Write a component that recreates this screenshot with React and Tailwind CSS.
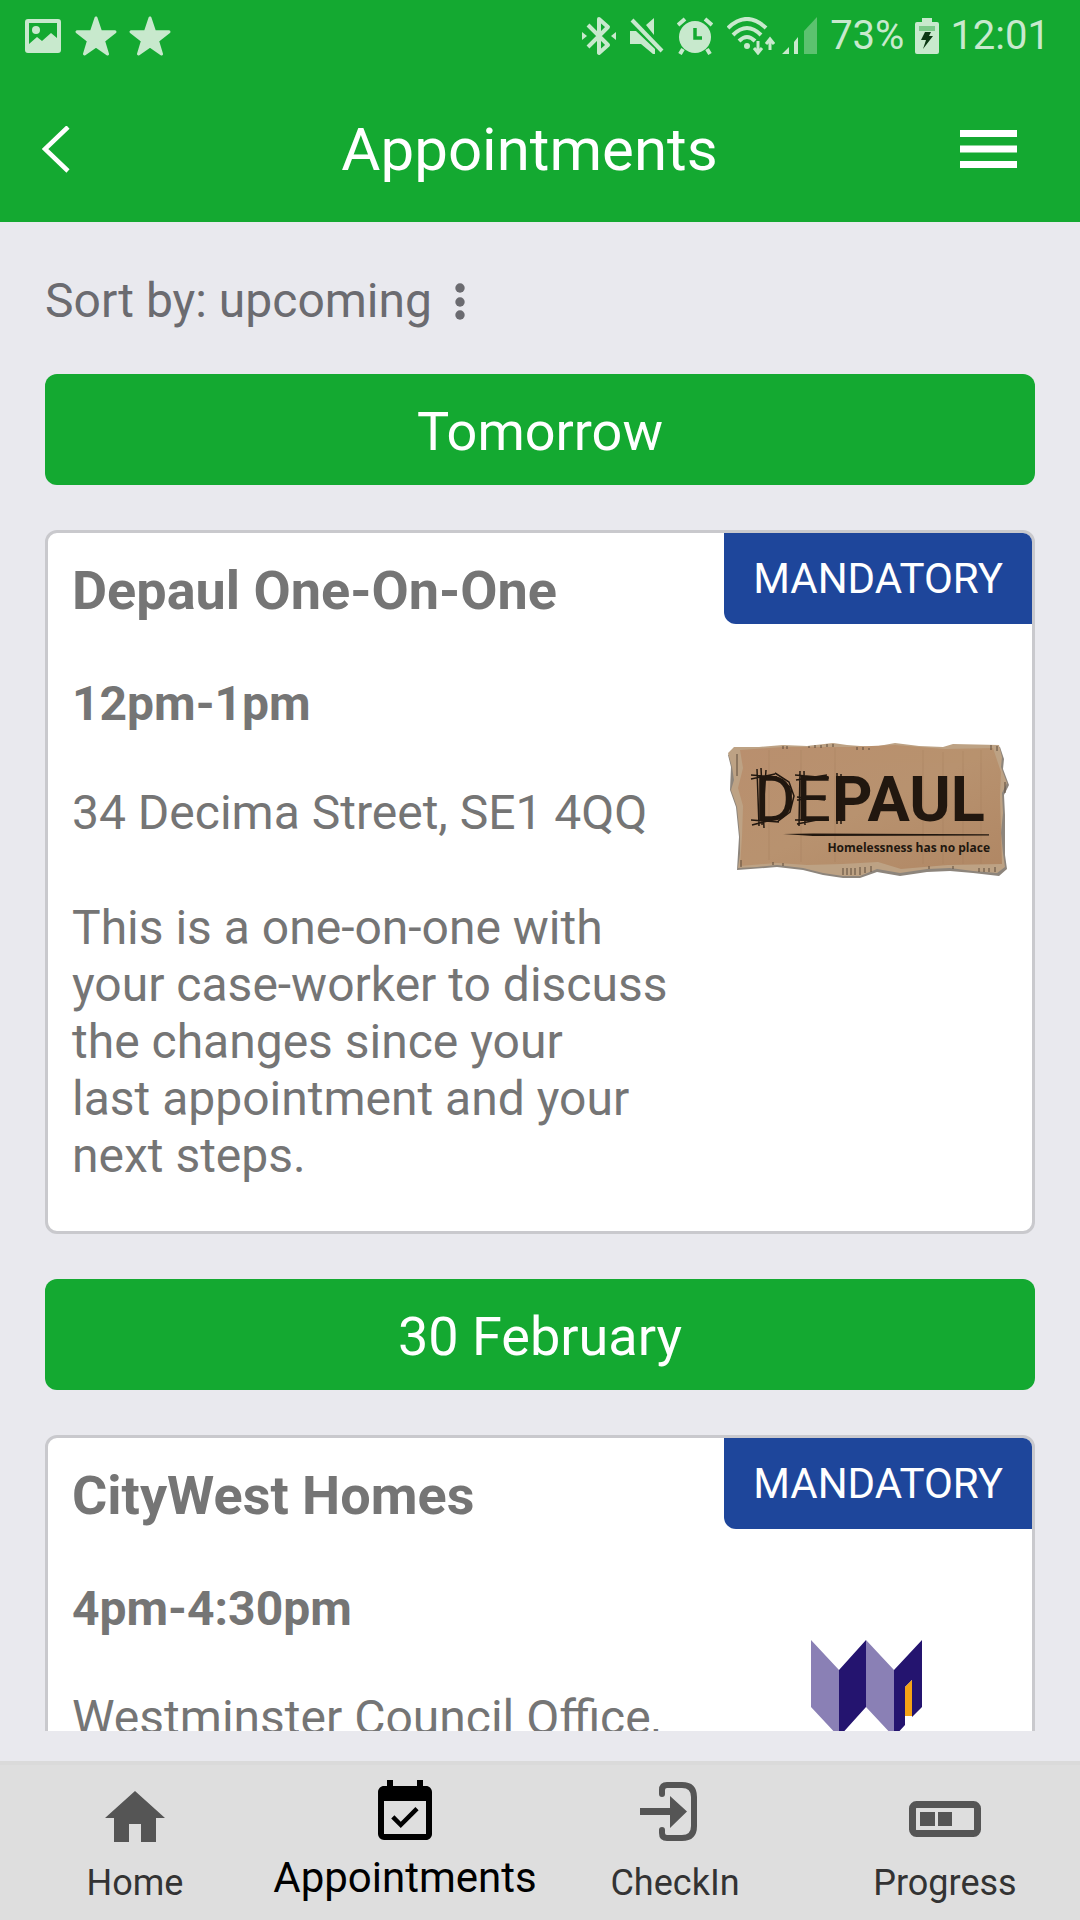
import React, { useState } from 'react';
import { MdHome, MdEventAvailable } from 'react-icons/md';

const appointments = [
  {
    day: 'Tomorrow',
    title: 'Depaul One-On-One',
    time: '12pm-1pm',
    address: '34 Decima Street, SE1 4QQ',
    details:
      'This is a one-on-one with your case-worker to discuss the changes since your\nlast appointment and your next steps.',
    logo: 'depaul',
  },
  {
    day: '30 February',
    title: 'CityWest Homes',
    time: '4pm-4:30pm',
    address: 'Westminster Council Office,',
    details: '',
    logo: 'citywest',
  },
];

const StarIcon = () => (
  <svg className="w-[42px] h-[40px]" viewBox="0 0 42 40" fill="currentColor" stroke="currentColor" strokeWidth="3" strokeLinejoin="round">
    <path d="M21 2L25.5 15.5L40 15.8L28.5 24.8L32.5 38L21 30L9.5 38L13.5 24.8L2 15.8L16.5 15.5Z" />
  </svg>
);

const StatusBar = () => (
  <div className="flex items-center justify-between h-[70px] pt-0.5 pl-[25px] pr-[30px] text-[#c8e9cd]">
    <div className="flex items-center gap-3">
      <svg className="w-[36px] h-[34px] mr-0.5" viewBox="0 0 36 34" fill="currentColor">
        <path fillRule="evenodd" d="M3 0H33Q36 0 36 3V31Q36 34 33 34H3Q0 34 0 31V3Q0 0 3 0ZM4 4V25L12 18L17 22L26 14L32 19V4Z" />
        <circle cx="11" cy="11" r="4" />
      </svg>
      <StarIcon />
      <StarIcon />
    </div>

    <div className="flex items-center">
      {/* bluetooth */}
      <svg className="w-[34px] h-[40px] mr-[14px]" viewBox="0 0 34 40" fill="none" stroke="currentColor" strokeWidth="4">
        <path d="M6 9L26 29L17 37V3L26 11L6 31" strokeLinejoin="round" />
        <path d="M0 16L5 20L0 24ZM34 16L29 20L34 24Z" fill="currentColor" stroke="none" />
      </svg>
      {/* sound off */}
      <svg className="w-[34px] h-[38px] mr-[13px]" viewBox="0 0 34 38" fill="currentColor">
        <path d="M0 14H6L25 32V37H23L11 27H0ZM16 8L24 1V18Z" />
        <path d="M2 3L32 34" stroke="currentColor" strokeWidth="4" />
      </svg>
      {/* alarm */}
      <svg className="w-[36px] h-[38px] mr-[14px]" viewBox="0 0 36 38" fill="currentColor">
        <circle cx="18" cy="20" r="16" />
        <path d="M1 8L8 2M35 8L28 2M6 32L3 37M30 32L33 37" stroke="currentColor" strokeWidth="4" />
        <path d="M18 11V21H25" fill="none" stroke="#14a931" strokeWidth="3.5" />
      </svg>
      {/* wifi with traffic arrows */}
      <svg className="w-[48px] h-[38px] mr-[7px]" viewBox="0 0 48 38" fill="none" stroke="currentColor">
        <path d="M1 11Q20 -7 39 11M6 18Q20 4 34 18M12 24Q20 16 28 24" strokeWidth="4" />
        <circle cx="20" cy="29" r="3" fill="currentColor" stroke="none" />
        <path d="M31 24V36M27 31L31 36L35 31M43 33V22M39 27L43 22L47 27" strokeWidth="3" />
      </svg>
      {/* signal */}
      <svg className="w-[36px] h-[38px] mr-3" viewBox="0 0 36 38" fill="currentColor">
        <path d="M0 37L7 30V37ZM12 25L16 20V37H12Z" />
        <path d="M22 14L35 0V37H22Z" opacity="0.4" />
      </svg>
      <span className="text-[40px] leading-[44px]">73%</span>
      {/* battery */}
      <svg className="w-[24px] h-[38px] mx-[11px]" viewBox="0 0 24 38" fill="currentColor">
        <path d="M7 1H17V5H22Q24 5 24 7V35Q24 37 22 37H2Q0 37 0 35V7Q0 5 2 5H7Z" />
        <path d="M4 9H20V14H4Z" fill="#7cc98a" />
        <path d="M10 15L6 23H11L8 32L18 19H14L16 15Z" fill="#0c3814" />
      </svg>
      <span className="text-[40px] leading-[44px]">12:01</span>
    </div>
  </div>
);

const Header = () => (
  <header className="bg-[#14a931]">
    <StatusBar />
    <div className="grid grid-cols-[1fr_auto_1fr] items-center h-[152px] pt-2 pl-[42px] pr-[63px] text-white">
      <button type="button" aria-label="Back" className="justify-self-start">
        <svg className="w-[28px] h-[48px]" viewBox="0 0 28 48" fill="none" stroke="currentColor" strokeWidth="4.5">
          <path d="M26 1L3 23L26 45" />
        </svg>
      </button>
      <h1 className="text-[60px] leading-[72px]">Appointments</h1>
      <button type="button" aria-label="Menu" className="justify-self-end">
        <svg className="w-[57px] h-[40px]" viewBox="0 0 57 40" fill="currentColor">
          <path d="M0 0H57V7H0ZM0 15.5H57V22.5H0ZM0 31H57V38H0Z" />
        </svg>
      </button>
    </div>
  </header>
);

const DepaulLogo = () => (
  <svg className="w-[288px] h-[144px]" viewBox="0 0 288 144" role="img" aria-label="Depaul">
    <defs>
      <linearGradient id="card" x1="0" y1="0" x2="1" y2="1">
        <stop offset="0" stopColor="#b98f6e" />
        <stop offset="0.5" stopColor="#b8926f" />
        <stop offset="1" stopColor="#b08764" />
      </linearGradient>
    </defs>
    <path
      d="M12 11L60 9L110 7L124 9L150 11L172 7L220 11L230 8L277 9L281 21L280 31L286 47L281 57L282 77L282 117L284 131L276 138L250 135L227 133L204 134L177 138L154 134L137 140L120 140L100 137L80 132L54 129L14 132L16 99L13 69L7 52L8 29L5 17Z"
      fill="#8d857c"
    />
    <path
      d="M11 9L36 9L60 7L84 8L110 5L124 7L150 9L172 5L196 8L220 9L230 6L276 7L279 19L278 29L284 45L279 55L280 75L278 95L280 115L282 129L274 135L250 133L227 130L204 131L177 135L154 131L137 138L120 138L100 135L80 130L54 127L34 129L15 130L17 115L17 99L14 69L8 52L11 42L9 29L5 15Z"
      fill="#bda284"
    />
    <path
      d="M17 12L60 9L125 9L172 7L222 11L270 10L278 34L277 58L278 92L279 126L225 127L178 131L155 124L120 126L84 127L54 125L17 128L19 98L20 68L15 50L20 30Z"
      fill="url(#card)"
    />
    <path
      d="M60 8V11M64 8V11M86 8V10M92 7V10M98 7V10M104 6V9M110 6V9M134 9V12M140 9V12M146 10V12M268 7V12M274 8V13M14 16V38M282 44V55M120 130V137M124 130V137M128 130V137M132 130V137M137 129V137M142 129V135M148 128V134M206 128V131M230 128V131M256 130V134M261 130V134M266 130V134M272 129V134M18 122V129M50 124V127M60 125V128"
      stroke="#5c4a3a"
      strokeWidth="1"
    />
    <path d="M46 12V122M78 12V124M112 10V124M200 12V126M220 14V126M240 13V126M258 12V126" stroke="#a88160" strokeWidth="1" opacity="0.5" />
    <text y="83" fontSize="63" fill="#21170f" fontFamily="Roboto, sans-serif">
      <tspan x="31">DE</tspan>
      <tspan x="109" fontWeight="bold">PAUL</tspan>
    </text>
    {/* pencil strokes over the first letters */}
    <path
      d="M28 37L54 39M28 41L52 36M34 31L36 88M38 30L41 90M43 32L39 87M28 82L56 84M29 87L52 81M52 35L66 44L71 58L67 74L54 84M54 40L68 50L68 68L58 80M72 37L106 40M73 42L104 37M77 33L76 88M81 33L82 87M74 59L102 62M74 62L101 59M72 82L106 82M74 86L104 80M114 35V86M118 36V86"
      fill="none"
      stroke="#21170f"
      strokeWidth="1.5"
    />
    <path d="M60 96L90 95.5L266 96.2V97.5L90 98Z" fill="#21170f" />
    <text x="267" y="114" textAnchor="end" fontSize="12" fontWeight="700" fill="#21170f" fontFamily="'Open Sans', sans-serif">
      Homelessness has no place
    </text>
  </svg>
);

const CityWestLogo = () => (
  <svg className="w-[112px] h-[150px]" viewBox="0 0 112 150" role="img" aria-label="CityWest Homes">
    <path d="M0 0L28 30V97L0 67ZM55 0L83 30V97L55 67Z" fill="#8a80b5" />
    <path d="M28 30L55 0V67L28 97ZM83 30L111 0V67L101 77V40L94 47V85L83 97Z" fill="#24146f" />
    <path d="M94 47L101 40V76H94Z" fill="#f5a315" />
  </svg>
);

const AppointmentCard = ({ item }) => (
  <article className="flex bg-white border-[3px] border-[#c9c9cd] rounded-xl overflow-hidden text-[#757575]">
    <div className="flex-1 flex flex-col gap-[52px] pt-[26px] pl-6 pr-[30px] pb-[47px]">
      <h3 className="text-[54px] leading-[64px] font-bold whitespace-nowrap">{item.title}</h3>
      <p className="text-[48px] leading-[57px] font-bold">{item.time}</p>
      <p className="text-[48px] leading-[57px] whitespace-nowrap">{item.address}</p>
      <p className="mt-1.5 text-[48px] leading-[57px] whitespace-pre-line">{item.details}</p>
    </div>
    <div className="w-[330px] shrink-0 flex flex-col items-center">
      <span className="self-end px-[29px] py-[21px] rounded-bl-xl bg-[#1e469b] text-white text-[42px] leading-[49px]">
        MANDATORY
      </span>
      <div className="mt-20 h-[212px] flex items-center">
        {item.logo === 'depaul' ? <DepaulLogo /> : <CityWestLogo />}
      </div>
    </div>
  </article>
);

const CheckInIcon = () => (
  <svg className="w-[72px] h-[72px]" viewBox="0 0 72 72" fill="none" stroke="currentColor">
    <path d="M23 12V8Q23 3 28 3H43Q55 3 55 15V44Q55 56 43 56H28Q23 56 23 51V48" strokeWidth="6" strokeLinecap="round" />
    <path d="M1 26H31V14L48 29.5L31 46V33H1Z" fill="currentColor" stroke="none" />
  </svg>
);

const ProgressIcon = () => (
  <svg className="w-[72px] h-[72px]" viewBox="0 0 72 72" fill="currentColor">
    <rect x="3.5" y="22.5" width="65" height="29" rx="4" fill="none" stroke="currentColor" strokeWidth="7" />
    <path d="M11 30H26V44H11ZM29 30H43V44H29Z" />
  </svg>
);

const tabs = [
  { name: 'Home', icon: <MdHome className="w-[72px] h-[72px]" /> },
  { name: 'Appointments', icon: <MdEventAvailable className="w-[72px] h-[72px]" /> },
  { name: 'CheckIn', icon: <CheckInIcon /> },
  { name: 'Progress', icon: <ProgressIcon /> },
];

const TabBar = ({ active, onChange }) => (
  <nav className="grid grid-cols-4 h-[159px] bg-[#dedede] border-t-4 border-[#dadada]">
    {tabs.map((tab) => (
      <button
        key={tab.name}
        type="button"
        onClick={() => onChange(tab.name)}
        className={`flex flex-col items-center gap-[5px] ${
          active === tab.name ? 'pt-3 text-[42px] text-black' : 'pt-[17px] text-[36px] text-[#555555]'
        }`}
      >
        {tab.icon}
        <span className={`leading-[48px] ${active === tab.name ? 'text-black' : 'text-[#333333]'}`}>{tab.name}</span>
      </button>
    ))}
  </nav>
);

export default function App() {
  const [active, setActive] = useState('Appointments');

  return (
    <div className="flex flex-col h-screen bg-[#e9e9ee] font-['Roboto',sans-serif]">
      <Header />

      <main className="flex-1 min-h-0 mb-[30px] px-[45px] pt-[50px] overflow-y-auto [scrollbar-width:none]">
        <button type="button" className="flex items-center gap-[22px] text-[48px] leading-[57px] text-[#6b6b70]">
          Sort by: upcoming
          <svg className="w-[12px] h-[38px]" viewBox="0 0 12 38" fill="currentColor">
            <circle cx="6" cy="6" r="4.7" />
            <circle cx="6" cy="20" r="4.7" />
            <circle cx="6" cy="33" r="4.7" />
          </svg>
        </button>

        {appointments.map((item) => (
          <section key={item.title} className="flex flex-col gap-[45px] mt-[45px]">
            <h2 className="pt-[25px] pb-[21px] rounded-xl bg-[#14a931] text-white text-center text-[54px] leading-[65px]">
              {item.day}
            </h2>
            <AppointmentCard item={item} />
          </section>
        ))}
      </main>

      <TabBar active={active} onChange={setActive} />
    </div>
  );
}
